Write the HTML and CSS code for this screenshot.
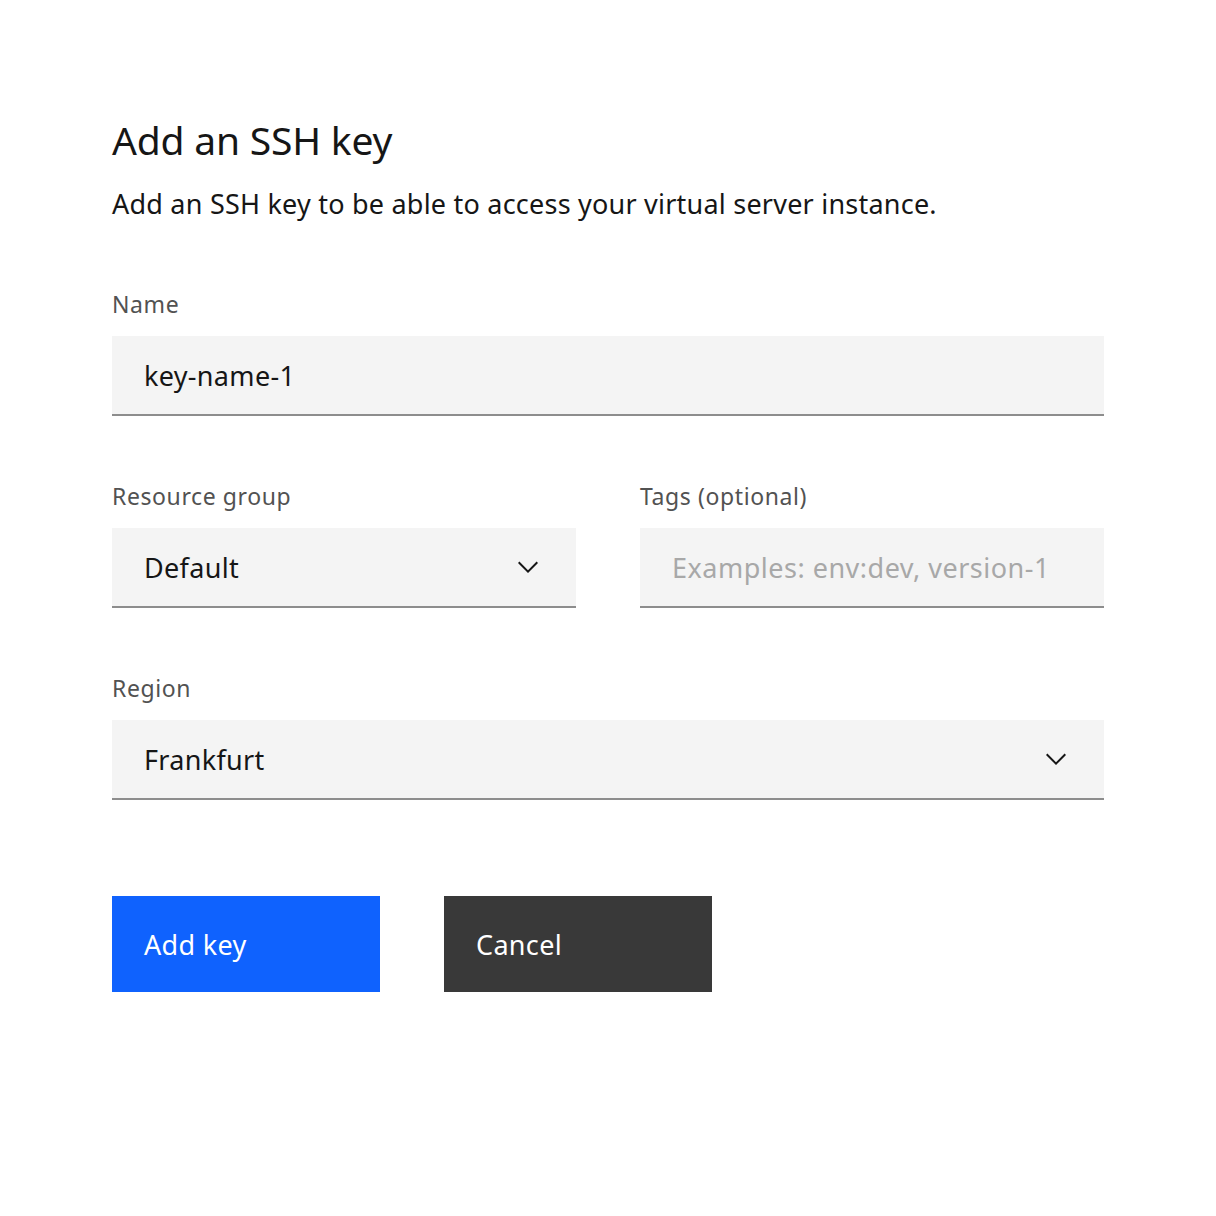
FILE: index.html
```html
<!DOCTYPE html>
<html lang="en">
<head>
<meta charset="utf-8">
<title>Add an SSH key</title>
<link rel="stylesheet" href="styles.css">
</head>
<body>
<main class="page">
  <h1 class="title">Add an SSH key</h1>
  <p class="desc">Add an SSH key to be able to access your virtual server instance.</p>

  <div class="field">
    <div class="label">Name</div>
    <div class="input"><span class="value">key-name-1</span></div>
  </div>

  <div class="row">
    <div class="field">
      <div class="label">Resource group</div>
      <div class="input select"><span class="value">Default</span>
        <svg class="chev" viewBox="0 0 16 16" width="32" height="32"><path d="M8 11L3 6 3.7 5.3 8 9.6 12.3 5.3 13 6z" fill="#161616"/></svg>
      </div>
    </div>
    <div class="field">
      <div class="label">Tags (optional)</div>
      <div class="input"><span class="placeholder">Examples: env:dev, version-1</span></div>
    </div>
  </div>

  <div class="field">
    <div class="label">Region</div>
    <div class="input select"><span class="value">Frankfurt</span>
      <svg class="chev" viewBox="0 0 16 16" width="32" height="32"><path d="M8 11L3 6 3.7 5.3 8 9.6 12.3 5.3 13 6z" fill="#161616"/></svg>
    </div>
  </div>

  <div class="actions">
    <div class="btn primary">Add key</div>
    <div class="btn secondary">Cancel</div>
  </div>
</main>
</body>
</html>
```

FILE: styles.css
```css
* { box-sizing: border-box; }
html, body { margin: 0; padding: 0; background: #ffffff; }
body {
  font-family: "Noto Sans", "Liberation Sans", sans-serif;
  color: #161616;
}
.page {
  width: 992px;
  margin: 0 0 0 112px;
  padding-top: 112px;
  display: flex;
  flex-direction: column;
}
.title {
  margin: 0;
  font-size: 39px;
  line-height: 56px;
  font-weight: 400;
  letter-spacing: -0.2px;
}
.desc {
  margin: 16px 0 0 0;
  font-size: 27px;
  line-height: 40px;
  letter-spacing: 0.22px;
  font-weight: 400;
}
.field {
  display: flex;
  flex-direction: column;
  margin-top: 64px;
  min-width: 0;
}
.row {
  display: grid;
  grid-template-columns: 1fr 1fr;
  column-gap: 64px;
}
.label {
  font-size: 23px;
  line-height: 32px;
  letter-spacing: 0.6px;
  color: #525252;
  margin-bottom: 16px;
}
.input {
  height: 80px;
  background: #f4f4f4;
  border-bottom: 2px solid #8d8d8d;
  padding: 0 32px;
  display: flex;
  align-items: center;
  font-size: 27px;
  letter-spacing: 0.32px;
}
.value { color: #161616; }
.placeholder { color: #a8a8a8; letter-spacing: 0.5px; }
.select { justify-content: space-between; padding-right: 32px; }
.chev { display: block; }
.actions {
  display: flex;
  gap: 64px;
  margin-top: 96px;
}
.btn {
  width: 268px;
  height: 96px;
  padding: 0 32px;
  display: flex;
  align-items: center;
  font-size: 27px;
  letter-spacing: 0.32px;
  color: #ffffff;
}
.primary { background: #0f62fe; }
.secondary { background: #393939; }
```
